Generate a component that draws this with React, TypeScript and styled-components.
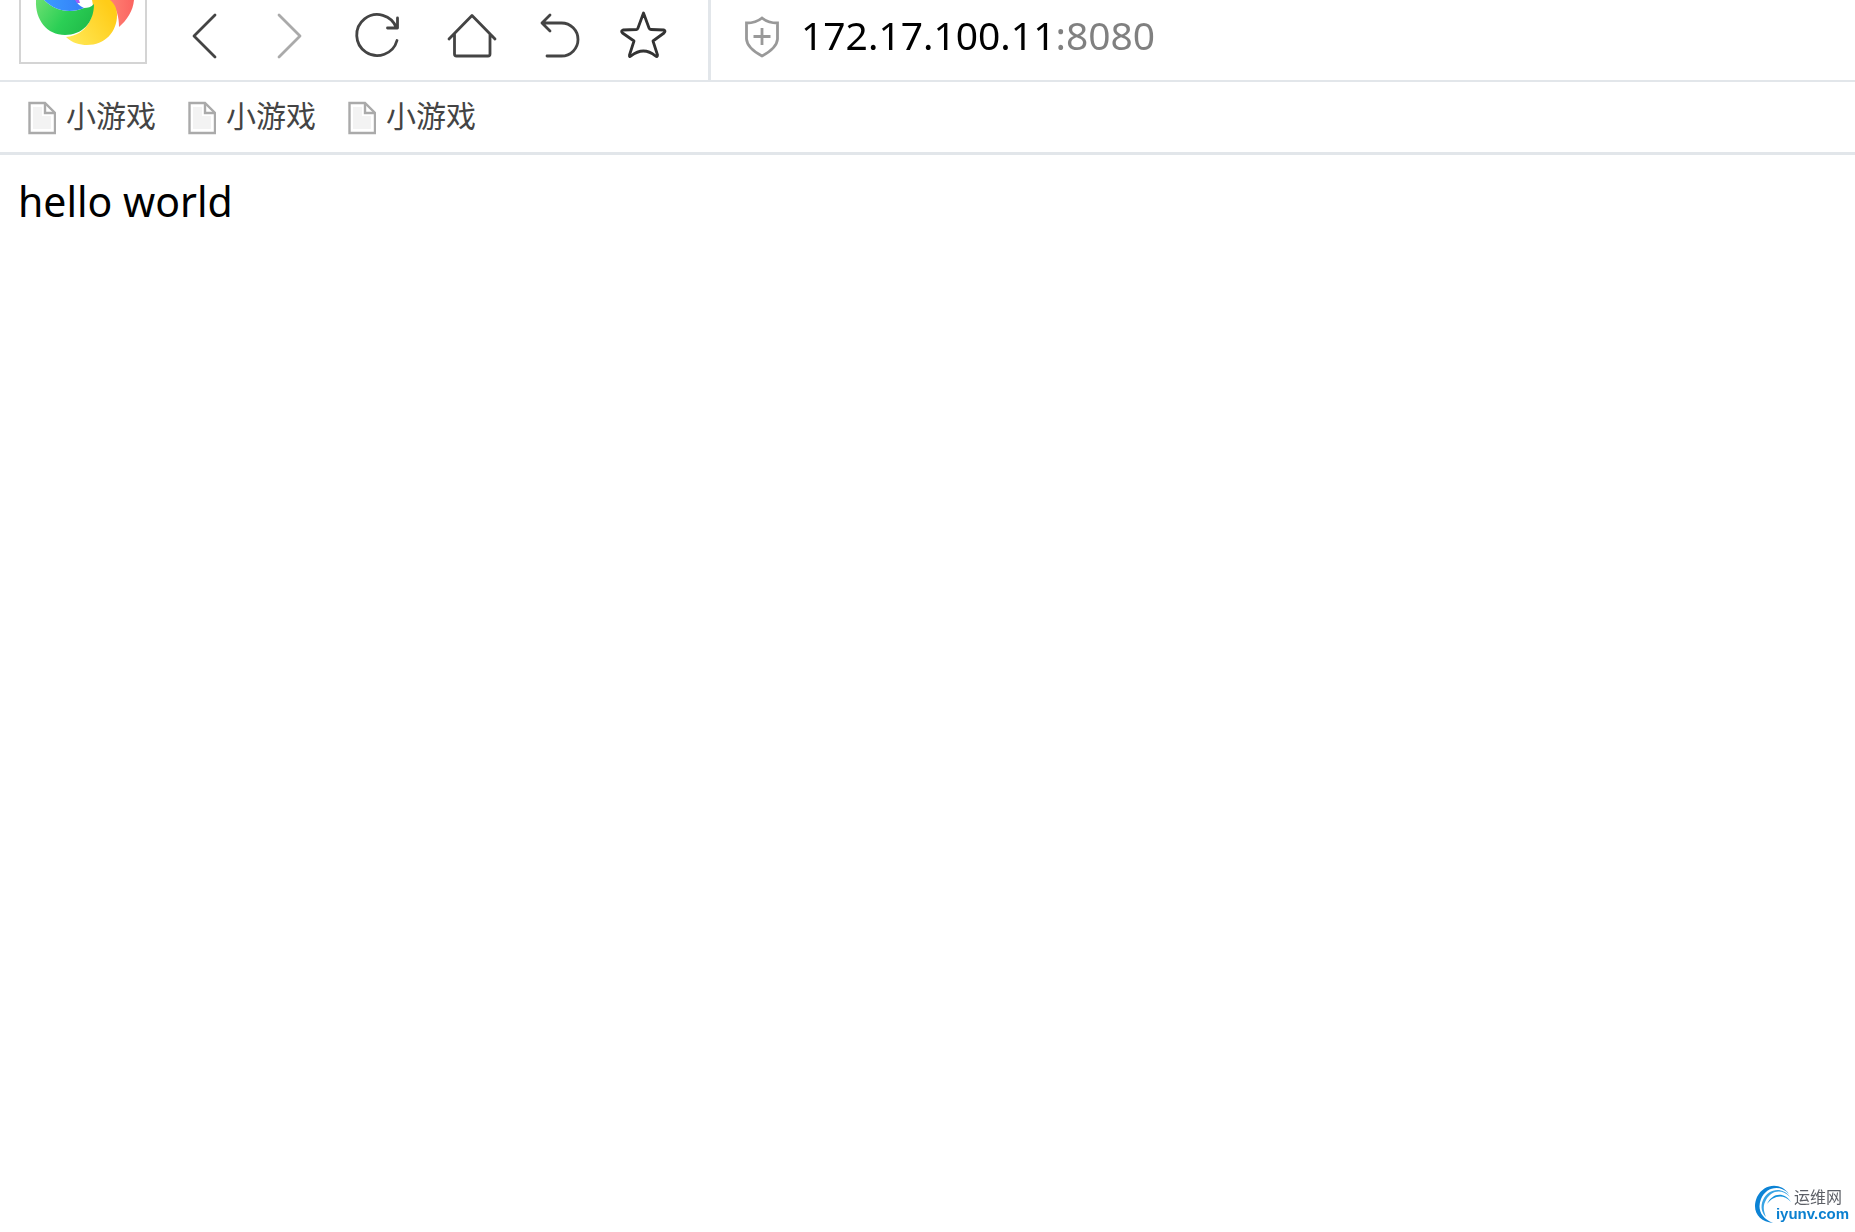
import React, { useState } from "react";
import styled, { createGlobalStyle } from "styled-components";

const line = "#e2e6ea";

const GlobalStyle = createGlobalStyle`
  *, *::before, *::after { box-sizing: border-box; }
  body {
    margin: 0;
    background: #fff;
    color: #000;
    font-family: "Noto Sans", "Noto Sans CJK SC", sans-serif;
  }
`;

const Browser = styled.div`
  display: flex;
  flex-direction: column;
  min-height: 100vh;
`;

const Toolbar = styled.header`
  display: flex;
  align-items: stretch;
  height: 82px;
  padding-left: 19px;
  border-bottom: 2px solid ${line};
`;

const LogoButton = styled.button`
  align-self: flex-start;
  width: 128px;
  height: 64px;
  padding: 0;
  border: 2px solid #d4d4d4;
  border-top: 0;
  background: #fff;
  cursor: pointer;

  svg { display: block; }
`;

const Nav = styled.nav`
  display: flex;
  align-items: center;
  gap: 24px;
  padding: 0 32px 8px 25px;
  border-right: 3px solid ${line};
`;

const NavButton = styled.button<{ $color?: string }>`
  width: 64px;
  height: 64px;
  padding: 0;
  border: 0;
  background: none;
  color: ${(p) => p.$color ?? "#444"};
  cursor: pointer;

  svg {
    display: block;
    fill: none;
    stroke: currentColor;
    stroke-width: 2.8;
    stroke-linecap: round;
    stroke-linejoin: round;
  }
`;

const AddressBar = styled.form`
  display: flex;
  flex: 1;
  align-items: center;
  gap: 21px;
  min-width: 0;
  padding: 0 16px 6px 33px;
`;

const AddressInput = styled.input`
  flex: 1;
  min-width: 0;
  height: 60px;
  padding: 0 0 6px;
  border: 0;
  outline: 0;
  font: 39px/54px "Noto Sans", sans-serif;
  color: transparent;
  caret-color: #000;
  background: linear-gradient(to right, #000 254px, #808080 254px);
  background-clip: text;
  -webkit-background-clip: text;
`;

const Bookmarks = styled.nav`
  display: flex;
  align-items: center;
  gap: 32px;
  height: 73px;
  padding: 2px 0 0 28px;
  border-bottom: 3px solid ${line};
`;

const Bookmark = styled.a`
  display: flex;
  align-items: center;
  gap: 10px;
  color: #444;
  font: 30px/40px "Noto Sans CJK SC", sans-serif;
  text-decoration: none;

  svg { display: block; }
`;

const BookmarkName = styled.span`
  padding-bottom: 8px;
`;

const Page = styled.main`
  flex: 1;
  padding: 18px;
`;

const Greeting = styled.p`
  margin: 0;
  font-size: 41px;
  line-height: 56px;
`;

const Watermark = styled.a`
  position: fixed;
  right: 6px;
  bottom: 6px;
  display: grid;
  color: #0b80d0;
  text-decoration: none;

  > * { grid-area: 1 / 1; }
`;

const WatermarkText = styled.span`
  display: flex;
  flex-direction: column;
  padding: 3px 0 0 22px;
`;

const SiteName = styled.span`
  padding-left: 18px;
  color: #5c5f66;
  font: 16px/18px "Noto Sans CJK SC", sans-serif;
`;

const SiteDomain = styled.span`
  font: bold 15px/18px "Liberation Sans", Arial, sans-serif;
`;

const Logo = () => (
  <svg width="124" height="62" viewBox="21 0 124 62" aria-hidden="true">
    <defs>
      <linearGradient id="blue" x1="0" x2="1">
        <stop offset="0" stopColor="#3b9bff" />
        <stop offset="1" stopColor="#347ff8" />
      </linearGradient>
      <linearGradient id="green" x1="0" x2="1" y2="0.4">
        <stop offset="0" stopColor="#6ce071" />
        <stop offset="0.6" stopColor="#2bcf55" />
        <stop offset="1" stopColor="#22be4b" />
      </linearGradient>
      <linearGradient id="yellow" x1="0" x2="1" y1="1" y2="0.4">
        <stop offset="0" stopColor="#ffeb5c" />
        <stop offset="1" stopColor="#ffcc18" />
      </linearGradient>
      <linearGradient id="red" x1="0" x2="1">
        <stop offset="0" stopColor="#ff8174" />
        <stop offset="1" stopColor="#fb6460" />
      </linearGradient>
    </defs>
    <path d="M109 0C117 8 119 17 119 27C127 20 133 11 134 0Z" fill="url(#red)" />
    <path d="M92 0C96 16 87 35 66 37C72 43 80 45 87 45C105 45 117 32 117 15C117 9 115 4 110 0Z" fill="url(#yellow)" />
    <path d="M36 0C35 20 47 35 65 35C82 35 94 23 94 4C91 7 88 8 84 8C70 14 55 11 44 0Z" fill="url(#green)" />
    <path d="M44 0C55 11 70 14 84 8C80 6 77 4 76 0Z" fill="url(#blue)" />
    <path d="M75 0L77 3L80 3L79 0Z" fill="#a05df5" />
  </svg>
);

const PageIcon = () => (
  <svg width="28" height="34" viewBox="0 0 28 34" fill="none" aria-hidden="true">
    <path d="M1.5 2H17L27 12V32H1.5Z" fill="#fff" stroke="#aaa" strokeWidth="2.4" />
    <path d="M5 6H14V15H23V28H5Z" fill="#f3f3f3" />
    <path d="M17 2V12H27" stroke="#aaa" strokeWidth="2.4" />
  </svg>
);

const Swoosh = () => (
  <svg width="42" height="42" viewBox="0 0 42 42" aria-hidden="true">
    <path d="M35 10C27 -2 10 -1 3 13C-3 27 5 38 19 39C7 34 3 25 7 15C12 3 26 0 35 10Z" fill="#0c83d5" />
    <path d="M36 13C28 2 14 5 9 16C6 23 8 29 12 33C9 26 9 21 12 16C17 7 27 4 36 13Z" fill="#38a4e4" />
    <path d="M37 18C30 7 18 9 13 20C19 12 29 9 37 18Z" fill="#1391dc" />
  </svg>
);

const navItems = [
  { label: "Back", color: "#444", path: "M43 11L22 32L43 53" },
  { label: "Forward", color: "#aaa", path: "M19 11L40 32L19 53" },
  { label: "Reload", color: "#444", path: "M49 36.500A20.500 20.500 0 1 1 48.500 24M49.500 14V24H39.500" },
  { label: "Home", color: "#444", path: "M13 35L36 11.500L59 35M18.500 30V50Q18.500 52 20.500 52H52Q54 52 54 50V30" },
  { label: "Undo", color: "#444", path: "M26 11L18 19L26 27M18 19H37.500A16.500 16.500 0 0 1 37.500 52H23" },
  {
    label: "Favorite",
    color: "#333",
    path: "M31.500 9L37 24Q37.500 25.500 39 25.500L52 26Q54 27 52 29L41 37L45.500 51Q45.500 53.500 43.500 52Q31.500 42 19 52Q17 53.500 17.500 51L22 37L10.500 29Q8.500 27 11 26L24.500 25.500Q25.500 25.500 26 24Z",
  },
];

const bookmarks = ["小游戏", "小游戏", "小游戏"];

export default function App() {
  const [address, setAddress] = useState("172.17.100.11:8080");

  return (
    <Browser>
      <GlobalStyle />
      <Toolbar>
        <LogoButton type="button" aria-label="Browser menu">
          <Logo />
        </LogoButton>
        <Nav aria-label="Navigation">
          {navItems.map((item) => (
            <NavButton key={item.label} type="button" aria-label={item.label} $color={item.color}>
              <svg width="64" height="64" viewBox="0 0 64 64" aria-hidden="true">
                <path d={item.path} />
              </svg>
            </NavButton>
          ))}
        </Nav>
        <AddressBar onSubmit={(e) => e.preventDefault()}>
          <svg width="36" height="42" viewBox="0 0 36 42" fill="none" stroke="#999" strokeWidth="2.8" aria-hidden="true">
            <path d="M18 2Q12 7 2.500 7V23Q3 32 18 40Q33 32 33.500 23V7Q24 7 18 2Z" />
            <path d="M18 12V29M9.500 20.500H26.500" />
          </svg>
          <AddressInput
            aria-label="Address"
            type="text"
            spellCheck={false}
            value={address}
            onChange={(e) => setAddress(e.target.value)}
          />
        </AddressBar>
      </Toolbar>
      <Bookmarks aria-label="Bookmarks">
        {bookmarks.map((name, i) => (
          <Bookmark key={i} href="#">
            <PageIcon />
            <BookmarkName>{name}</BookmarkName>
          </Bookmark>
        ))}
      </Bookmarks>
      <Page>
        <Greeting>hello world</Greeting>
      </Page>
      <Watermark href="#">
        <Swoosh />
        <WatermarkText>
          <SiteName>运维网</SiteName>
          <SiteDomain>iyunv.com</SiteDomain>
        </WatermarkText>
      </Watermark>
    </Browser>
  );
}
